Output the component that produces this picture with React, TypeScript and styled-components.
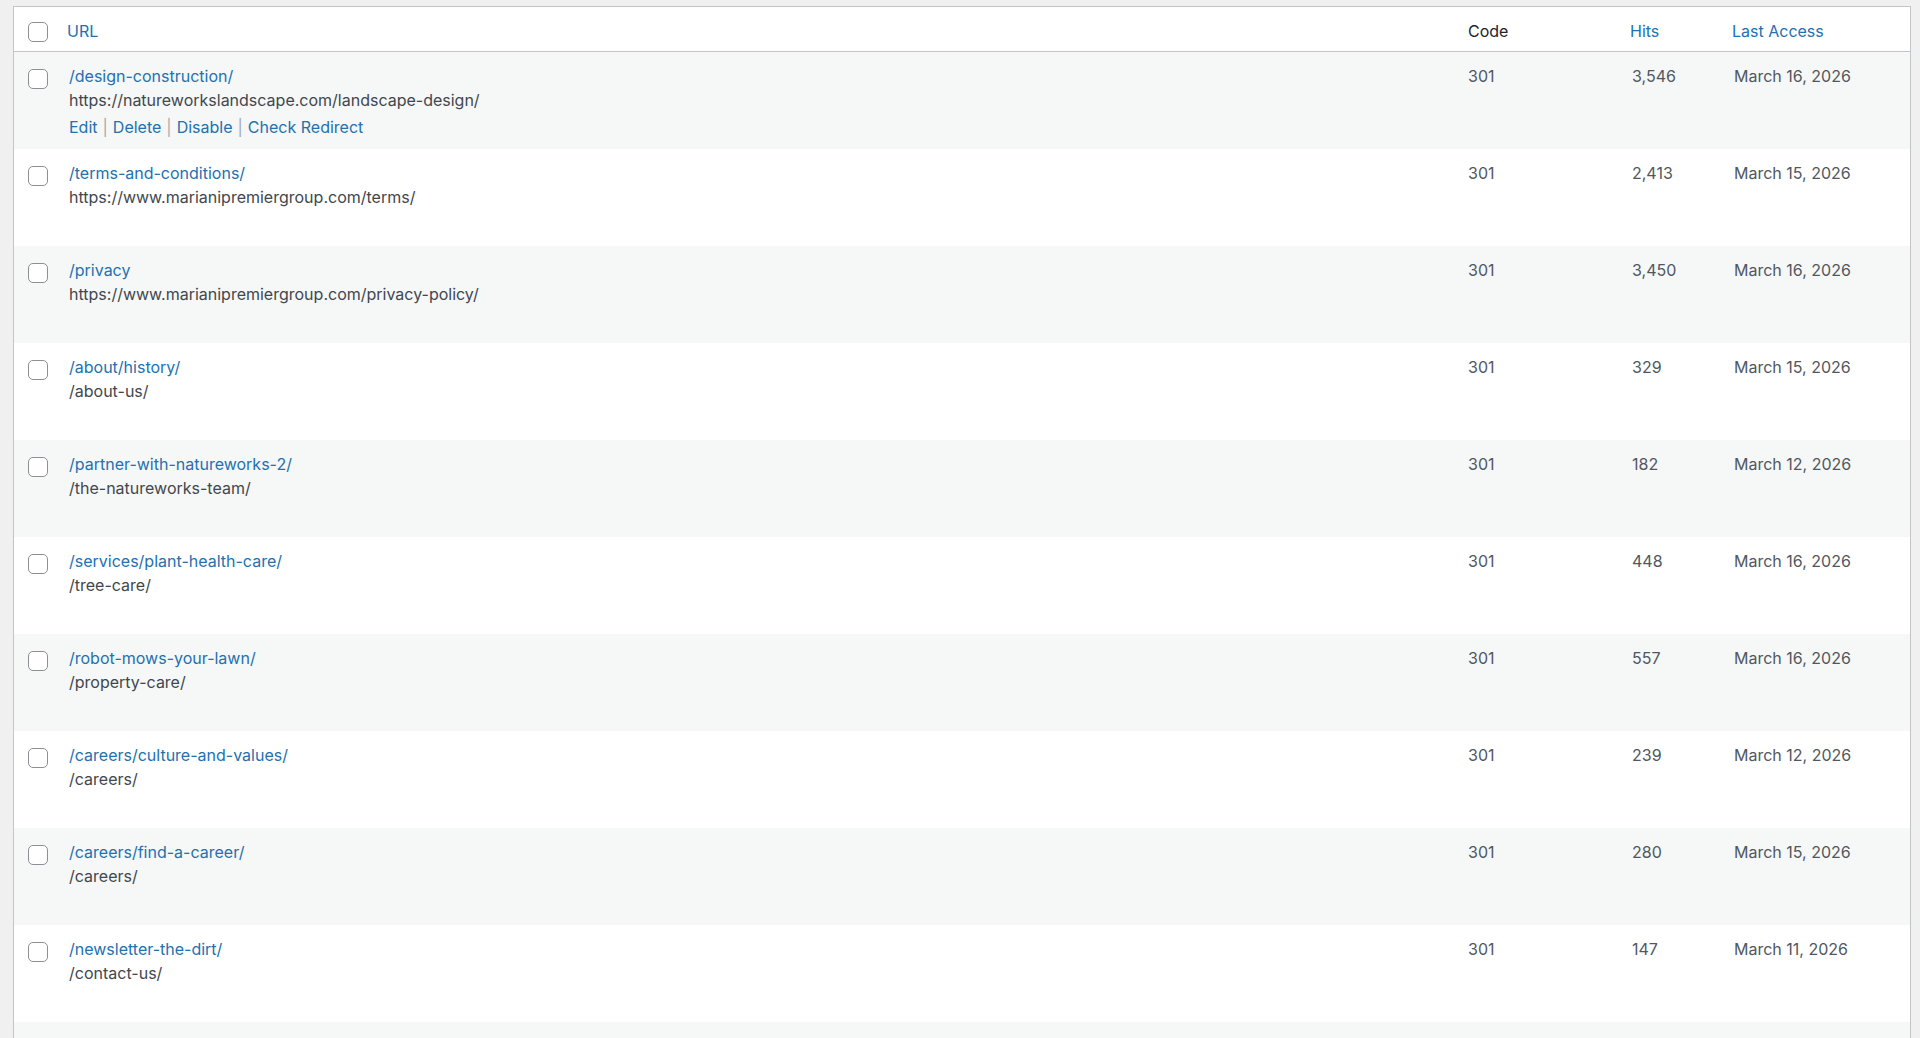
import React from "react"
import styled, { createGlobalStyle } from "styled-components"

interface Redirect {
  source: string
  target: string
  code: number
  hits: string
  lastAccess: string
}

const redirects: Redirect[] = [
  { source: "/design-construction/", target: "https://natureworkslandscape.com/landscape-design/", code: 301, hits: "3,546", lastAccess: "March 16, 2026" },
  { source: "/terms-and-conditions/", target: "https://www.marianipremiergroup.com/terms/", code: 301, hits: "2,413", lastAccess: "March 15, 2026" },
  { source: "/privacy", target: "https://www.marianipremiergroup.com/privacy-policy/", code: 301, hits: "3,450", lastAccess: "March 16, 2026" },
  { source: "/about/history/", target: "/about-us/", code: 301, hits: "329", lastAccess: "March 15, 2026" },
  { source: "/partner-with-natureworks-2/", target: "/the-natureworks-team/", code: 301, hits: "182", lastAccess: "March 12, 2026" },
  { source: "/services/plant-health-care/", target: "/tree-care/", code: 301, hits: "448", lastAccess: "March 16, 2026" },
  { source: "/robot-mows-your-lawn/", target: "/property-care/", code: 301, hits: "557", lastAccess: "March 16, 2026" },
  { source: "/careers/culture-and-values/", target: "/careers/", code: 301, hits: "239", lastAccess: "March 12, 2026" },
  { source: "/careers/find-a-career/", target: "/careers/", code: 301, hits: "280", lastAccess: "March 15, 2026" },
  { source: "/newsletter-the-dirt/", target: "/contact-us/", code: 301, hits: "147", lastAccess: "March 11, 2026" },
]

const actions = ["Edit", "Delete", "Disable", "Check Redirect"]

const GlobalStyle = createGlobalStyle`
  html, body {
    margin: 0;
    padding: 0;
    background: #f0f0f1;
    height: 100%;
    overflow: hidden;
  }
  body {
    font-family: Inter, "Noto Sans", sans-serif;
    font-size: 16px;
    color: #50575e;
  }
`

const Page = styled("div")`
  padding: 6px 9px 0 13px;
`

const Table = styled("div")`
  background: #fff;
  border: 1px solid #c3c4c7;
  border-bottom: 0;
`

const columns = "43px 1401px 162px 102px 1fr"

const HeaderRow = styled("div")`
  display: grid;
  grid-template-columns: ${columns};
  border-bottom: 1px solid #c3c4c7;
  height: 45px;
  box-sizing: border-box;
`

const HeaderCell = styled("div")<{ $sortable?: boolean }>`
  padding: 12px 10px 0;
  line-height: 24px;
  color: ${({ $sortable }) => ($sortable ? "#2271b1" : "#1d2327")};
`

const Row = styled("div")<{ $alt: boolean }>`
  display: grid;
  grid-template-columns: ${columns};
  height: 97px;
  background: ${({ $alt }) => ($alt ? "#f6f7f7" : "#fff")};
`

const NextRow = styled("div")`
  height: 40px;
  background: #f6f7f7;
`

const CheckCell = styled("div")<{ $top: number }>`
  padding: ${({ $top }) => $top}px 0 0 14px;
`

const Checkbox = styled("span")`
  display: block;
  width: 20px;
  height: 20px;
  box-sizing: border-box;
  border: 1.5px solid #8c8f94;
  border-radius: 5px;
  background: #fff;
`

const Cell = styled("div")`
  padding: 12px 10px 0;
  line-height: 24px;
`

const SourceLink = styled("a")`
  display: block;
  color: #2271b1;
  text-decoration: none;
  padding-left: 2px;
`

const Target = styled("div")`
  color: #41474e;
  padding-left: 2px;
`

const RowActions = styled("div")<{ $visible: boolean }>`
  padding: 3px 0 0 2px;
  visibility: ${({ $visible }) => ($visible ? "visible" : "hidden")};
  color: #a7aaad;
`

const ActionLink = styled("a")`
  color: #2271b1;
  text-decoration: none;
`

const Sep = styled("span")`
  margin: 0 5px;
  color: #a7aaad;
`

const Value = styled("div")<{ $shift?: number }>`
  padding-left: ${({ $shift }) => $shift ?? 0}px;
`

export default function App() {
  return (
    <>
      <GlobalStyle />
      <Page>
        <Table>
          <HeaderRow>
            <CheckCell $top={15}>
              <Checkbox />
            </CheckCell>
            <HeaderCell $sortable>URL</HeaderCell>
            <HeaderCell>Code</HeaderCell>
            <HeaderCell $sortable>Hits</HeaderCell>
            <HeaderCell $sortable>Last Access</HeaderCell>
          </HeaderRow>
          {redirects.map((r, i) => (
            <Row key={r.source} $alt={i % 2 === 0}>
              <CheckCell $top={17}>
                <Checkbox />
              </CheckCell>
              <Cell>
                <SourceLink href="#">{r.source}</SourceLink>
                <Target>{r.target}</Target>
                <RowActions $visible={i === 0}>
                  {actions.map((a, j) => (
                    <React.Fragment key={a}>
                      {j > 0 && <Sep>|</Sep>}
                      <ActionLink href="#">{a}</ActionLink>
                    </React.Fragment>
                  ))}
                </RowActions>
              </Cell>
              <Cell>
                <Value>{r.code}</Value>
              </Cell>
              <Cell>
                <Value $shift={2}>{r.hits}</Value>
              </Cell>
              <Cell>
                <Value $shift={2}>{r.lastAccess}</Value>
              </Cell>
            </Row>
          ))}
          <NextRow />
        </Table>
      </Page>
    </>
  )
}
